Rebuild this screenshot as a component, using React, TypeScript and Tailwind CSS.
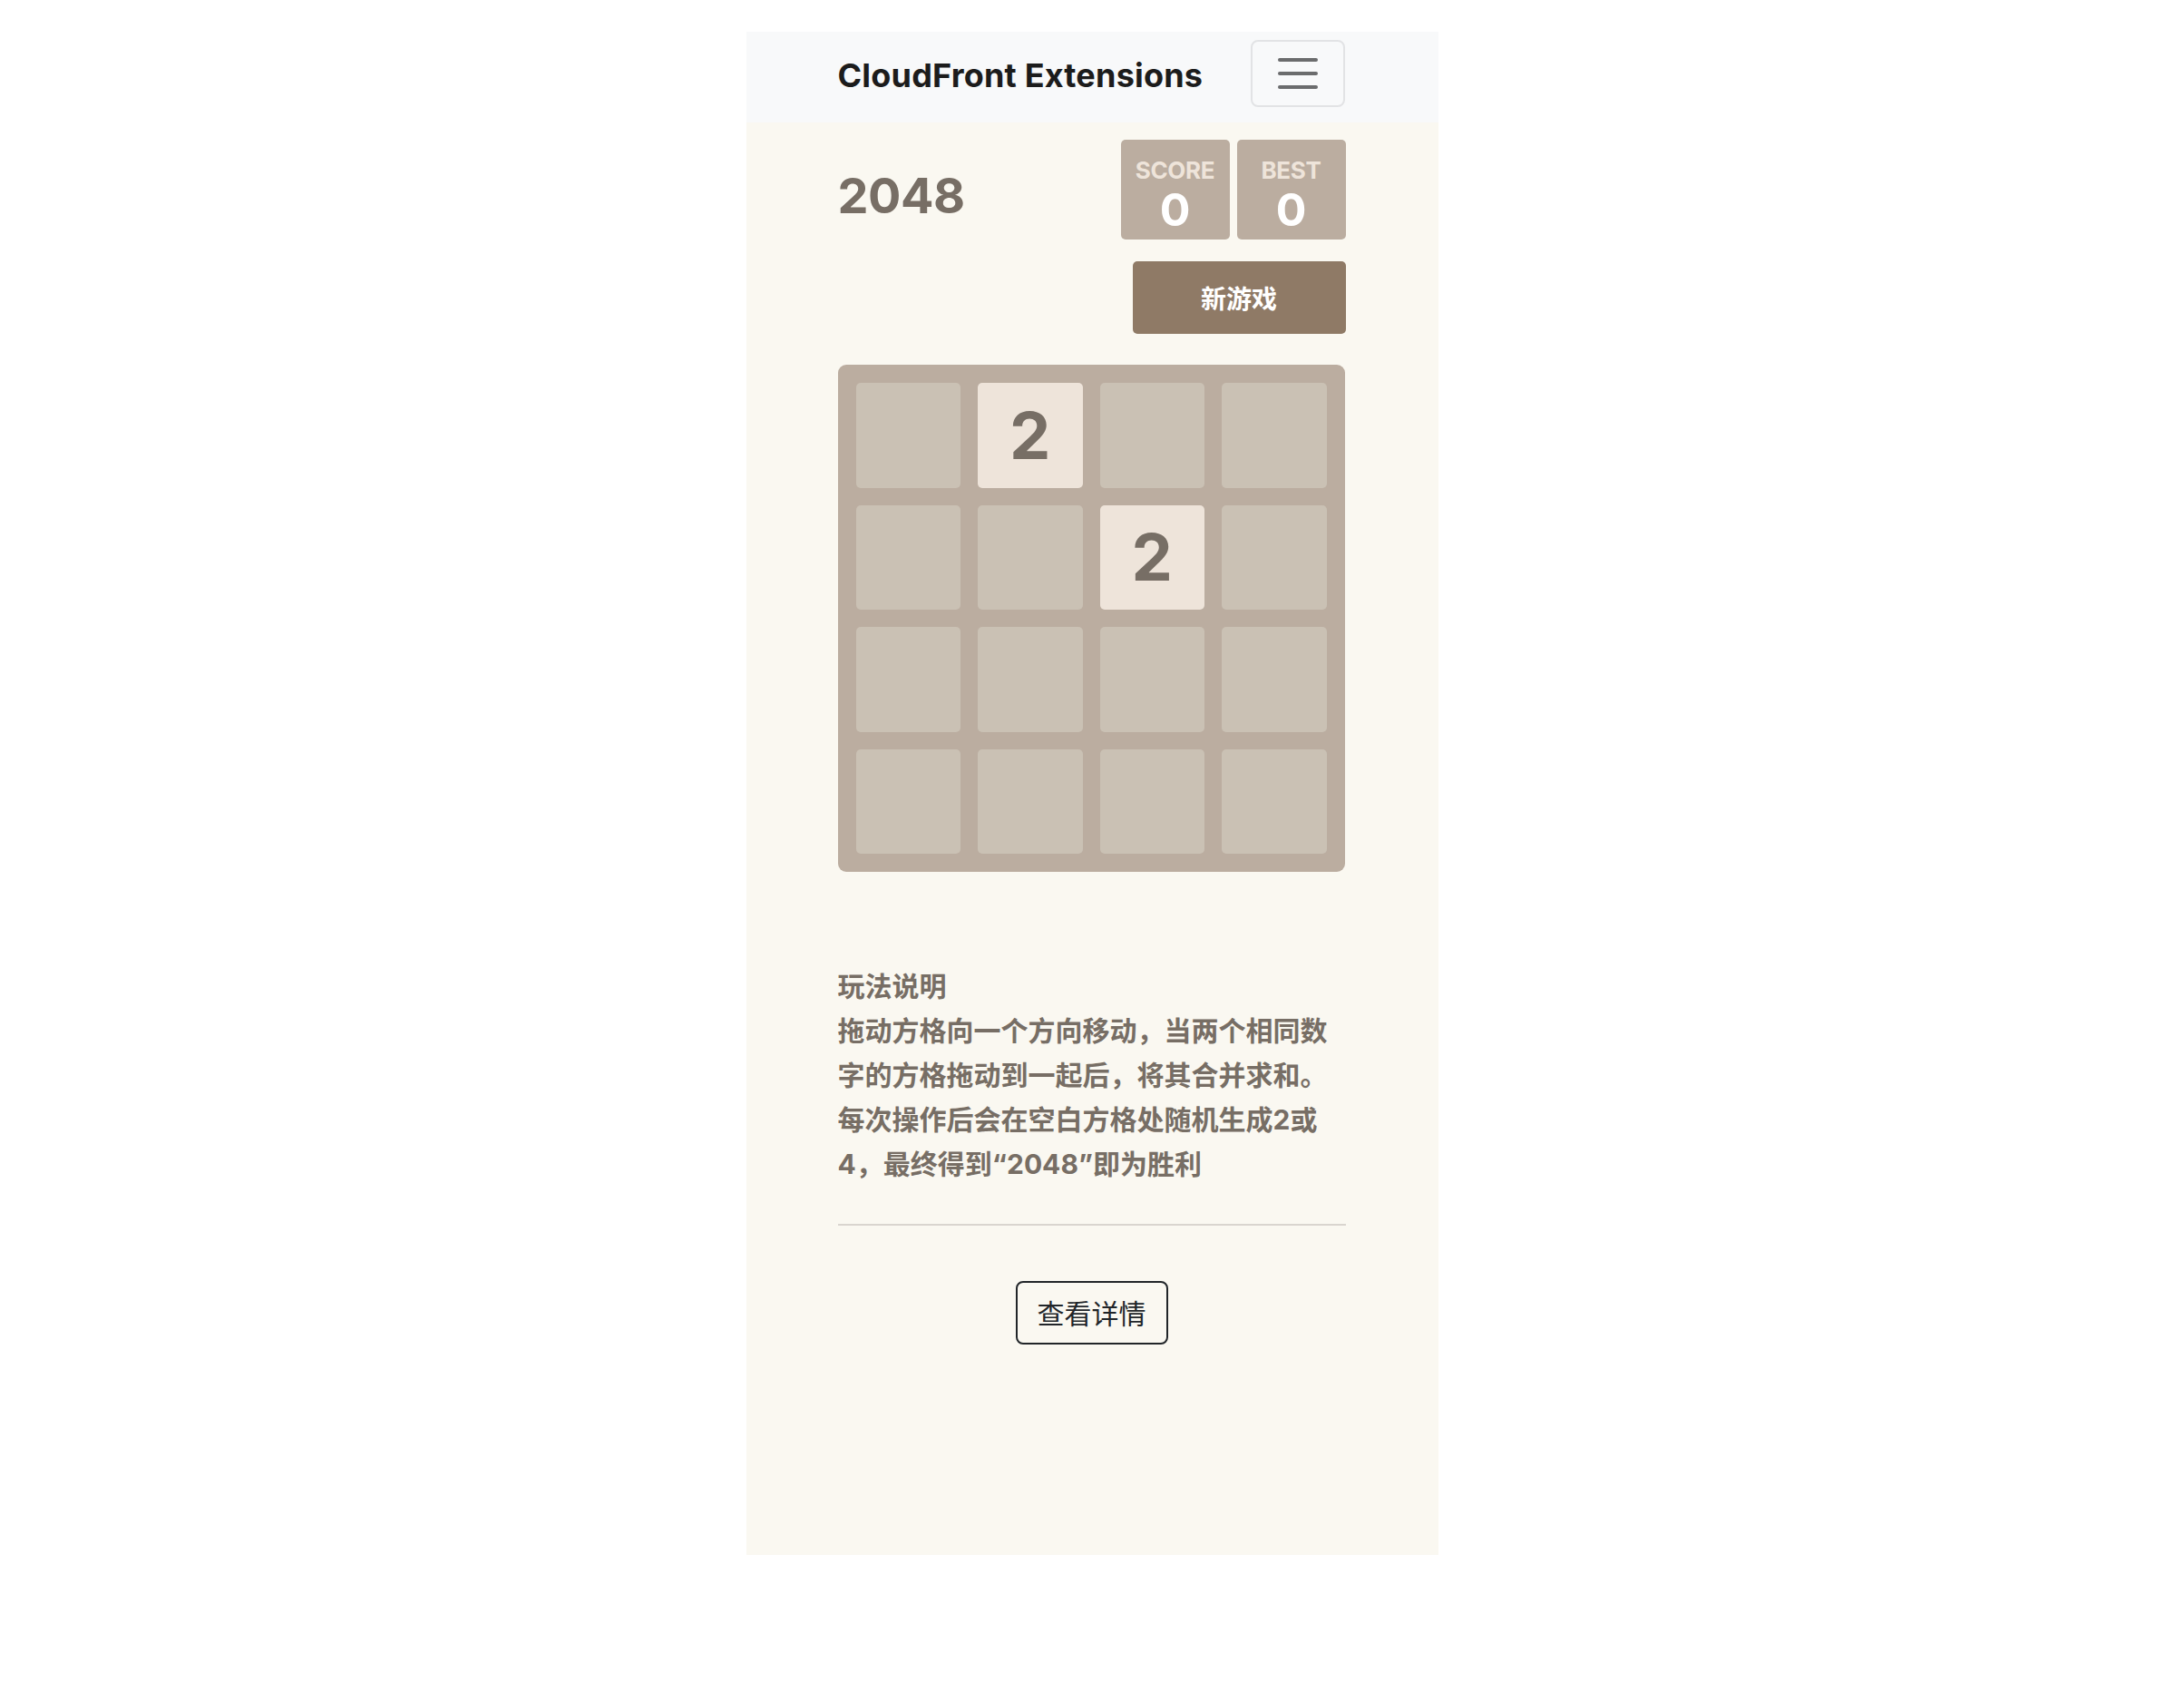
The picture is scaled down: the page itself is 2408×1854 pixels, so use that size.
import React from "react";

const latin = { fontFamily: '"Inter", "Noto Sans CJK SC", "Noto Sans", sans-serif' };
const cjk = { fontFamily: '"Inter", "Noto Sans CJK SC", sans-serif' };

export default function App() {
  const tiles = [0, 2, 0, 0, 0, 0, 2, 0, 0, 0, 0, 0, 0, 0, 0, 0];
  return (
    <div className="min-h-[1854px] w-full bg-white flex justify-center pt-[35px]" style={latin}>
      <div className="w-[763px] h-[1679px] bg-[#faf8f1] flex flex-col">
        <header className="h-[100px] bg-[#f8f9fa] flex items-center justify-between pl-[101px] pr-[103px] pt-[9px] pb-[17px]">
          <span className="text-[36px] font-bold text-[#1c1c1c] tracking-[0.2px] leading-none mt-[3px]">
            CloudFront Extensions
          </span>
          <button className="w-[104px] h-[74px] rounded-[8px] border-[2px] border-[#e2e3e5] flex flex-col items-center justify-center gap-[11px]">
            <span className="block w-[44px] h-[4px] rounded-full bg-[#6b6c6d]" />
            <span className="block w-[44px] h-[4px] rounded-full bg-[#6b6c6d]" />
            <span className="block w-[44px] h-[4px] rounded-full bg-[#6b6c6d]" />
          </button>
        </header>

        <main className="pl-[101px] pr-[102px] flex flex-col">
          <div className="mt-[19px] h-[110px] flex items-center justify-between">
            <h1 className="text-[54px] font-bold text-[#776e65] leading-none pt-[14px] tracking-[-0.5px]">2048</h1>
            <div className="flex gap-[8px]">
              {["SCORE", "BEST"].map((l) => (
                <div key={l} className="w-[120px] h-[110px] rounded-[5px] bg-[#bbada0] flex flex-col items-center">
                  <span className="mt-[21px] text-[26px] leading-[26px] font-bold text-[#eee4da] tracking-[-0.3px]">{l}</span>
                  <span className="mt-[5px] text-[50px] leading-[50px] font-bold text-white">0</span>
                </div>
              ))}
            </div>
          </div>

          <div className="mt-[24px] flex justify-end">
            <button
              className="w-[235px] h-[80px] rounded-[5px] bg-[#8f7a66] text-white text-[28px] font-bold pt-[4px]"
              style={cjk}
            >
              新游戏
            </button>
          </div>

          <div className="mt-[34px] h-[559px] w-[559px] rounded-[9px] bg-[#bbada0] p-[20px] grid grid-cols-4 grid-rows-4 gap-[19px]">
            {tiles.map((v, i) =>
              v ? (
                <div key={i} className="rounded-[5px] bg-[#eee4da] flex items-center justify-center text-[72px] font-bold text-[#776e65] leading-none">
                  {v}
                </div>
              ) : (
                <div key={i} className="rounded-[5px] bg-[#cac1b4]" />
              )
            )}
          </div>

          <div className="mt-[102px] text-[30px] leading-[49px] font-bold text-[#776e65]" style={cjk}>
            <div>玩法说明</div>
            <div>拖动方格向一个方向移动，当两个相同数字的方格拖动到一起后，将其合并求和。每次操作后会在空白方格处随机生成2或4，最终得到“2048”即为胜利</div>
          </div>

          <div className="mt-[41px] h-[2px] bg-[#d9d5cf]" />

          <div className="mt-[61px] flex justify-center">
            <button
              className="w-[168px] h-[70px] rounded-[8px] border-[2px] border-[#212529] text-[30px] text-[#212529] font-normal pt-[2px]"
              style={cjk}
            >
              查看详情
            </button>
          </div>
        </main>
      </div>
    </div>
  );
}
